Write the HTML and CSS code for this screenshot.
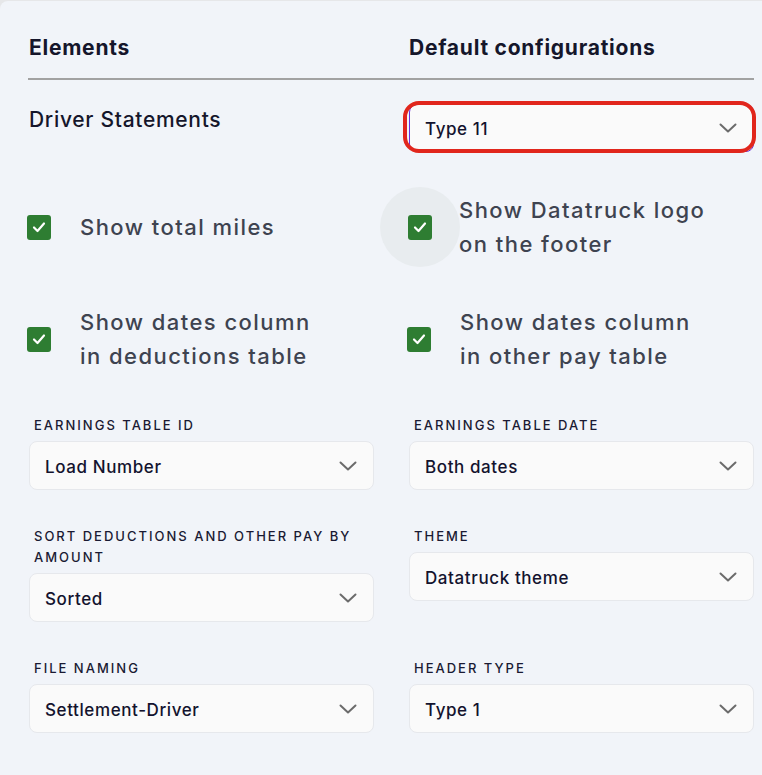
FILE: index.html
```html
<!DOCTYPE html>
<html>
<head>
<meta charset="utf-8">
<link rel="stylesheet" href="styles.css">
</head>
<body>
<div class="panel">
  <div class="head">
    <div class="head-title">Elements</div>
    <div class="head-title">Default configurations</div>
  </div>
  <div class="divider"></div>

  <div class="grid top-row">
    <div class="section-title">Driver Statements</div>
    <div class="select-wrap">
      <div class="select select-focused">
        <span class="select-value">Type 11</span>
        <svg class="chev" width="18" height="10" viewBox="0 0 18 10"><polyline points="1.5,1.5 9,8.5 16.5,1.5" fill="none" stroke="#6b6b6b" stroke-width="2" stroke-linecap="round" stroke-linejoin="round"/></svg>
      </div>
      <div class="annotation"></div>
    </div>
  </div>

  <div class="grid check-row first">
    <label class="check">
      <span class="box"><svg width="16" height="16" viewBox="0 0 16 16"><polyline points="3,8.5 6.5,12 13,4.5" fill="none" stroke="#fff" stroke-width="2.2" stroke-linecap="round" stroke-linejoin="round"/></svg></span>
      <span class="check-text">Show total miles</span>
    </label>
    <label class="check">
      <span class="box hovered"><svg width="16" height="16" viewBox="0 0 16 16"><polyline points="3,8.5 6.5,12 13,4.5" fill="none" stroke="#fff" stroke-width="2.2" stroke-linecap="round" stroke-linejoin="round"/></svg></span>
      <span class="check-text">Show Datatruck logo<br>on the footer</span>
    </label>
  </div>

  <div class="grid check-row second">
    <label class="check">
      <span class="box"><svg width="16" height="16" viewBox="0 0 16 16"><polyline points="3,8.5 6.5,12 13,4.5" fill="none" stroke="#fff" stroke-width="2.2" stroke-linecap="round" stroke-linejoin="round"/></svg></span>
      <span class="check-text">Show dates column<br>in deductions table</span>
    </label>
    <label class="check">
      <span class="box"><svg width="16" height="16" viewBox="0 0 16 16"><polyline points="3,8.5 6.5,12 13,4.5" fill="none" stroke="#fff" stroke-width="2.2" stroke-linecap="round" stroke-linejoin="round"/></svg></span>
      <span class="check-text">Show dates column<br>in other pay table</span>
    </label>
  </div>

  <div class="grid form-row row-1">
    <div class="field">
      <div class="label">EARNINGS TABLE ID</div>
      <div class="select"><span class="select-value">Load Number</span><svg class="chev" width="18" height="10" viewBox="0 0 18 10"><polyline points="1.5,1.5 9,8.5 16.5,1.5" fill="none" stroke="#6b6b6b" stroke-width="2" stroke-linecap="round" stroke-linejoin="round"/></svg></div>
    </div>
    <div class="field">
      <div class="label">EARNINGS TABLE DATE</div>
      <div class="select"><span class="select-value">Both dates</span><svg class="chev" width="18" height="10" viewBox="0 0 18 10"><polyline points="1.5,1.5 9,8.5 16.5,1.5" fill="none" stroke="#6b6b6b" stroke-width="2" stroke-linecap="round" stroke-linejoin="round"/></svg></div>
    </div>
  </div>

  <div class="grid form-row">
    <div class="field">
      <div class="label">SORT DEDUCTIONS AND OTHER PAY BY AMOUNT</div>
      <div class="select"><span class="select-value">Sorted</span><svg class="chev" width="18" height="10" viewBox="0 0 18 10"><polyline points="1.5,1.5 9,8.5 16.5,1.5" fill="none" stroke="#6b6b6b" stroke-width="2" stroke-linecap="round" stroke-linejoin="round"/></svg></div>
    </div>
    <div class="field">
      <div class="label">THEME</div>
      <div class="select"><span class="select-value">Datatruck theme</span><svg class="chev" width="18" height="10" viewBox="0 0 18 10"><polyline points="1.5,1.5 9,8.5 16.5,1.5" fill="none" stroke="#6b6b6b" stroke-width="2" stroke-linecap="round" stroke-linejoin="round"/></svg></div>
    </div>
  </div>

  <div class="grid form-row">
    <div class="field">
      <div class="label">FILE NAMING</div>
      <div class="select"><span class="select-value">Settlement-Driver</span><svg class="chev" width="18" height="10" viewBox="0 0 18 10"><polyline points="1.5,1.5 9,8.5 16.5,1.5" fill="none" stroke="#6b6b6b" stroke-width="2" stroke-linecap="round" stroke-linejoin="round"/></svg></div>
    </div>
    <div class="field">
      <div class="label">HEADER TYPE</div>
      <div class="select"><span class="select-value">Type 1</span><svg class="chev" width="18" height="10" viewBox="0 0 18 10"><polyline points="1.5,1.5 9,8.5 16.5,1.5" fill="none" stroke="#6b6b6b" stroke-width="2" stroke-linecap="round" stroke-linejoin="round"/></svg></div>
    </div>
  </div>
</div>
</body>
</html>
```

FILE: styles.css
```css
html, body {
  margin: 0;
  padding: 0;
}
body {
  background: #e6e7e9;
  font-family: Inter, "Noto Sans", "Liberation Sans", sans-serif;
  width: 762px;
  height: 775px;
  overflow: hidden;
}
.panel {
  margin-top: 1px;
  background: #f1f4f9;
  border-top-left-radius: 8px;
  height: 774px;
  padding: 33px 8px 0 29px;
  box-sizing: border-box;
}
.head {
  display: grid;
  grid-template-columns: 345px 345px;
  column-gap: 35px;
}
.head-title {
  font-size: 21px;
  line-height: 28px;
  font-weight: 700;
  color: #15162b;
  letter-spacing: 0.75px;
}
.divider {
  margin: 16px 0 0 -1px;
  width: 726px;
  height: 2px;
  background: #a2a2a2;
}
.grid {
  display: grid;
  grid-template-columns: 345px 345px;
  column-gap: 35px;
}
.top-row {
  margin-top: 24px;
}
.section-title {
  margin-top: 2px;
  font-size: 21px;
  line-height: 28px;
  font-weight: 500;
  color: #15162b;
  letter-spacing: 0.7px;
}
.select-wrap {
  position: relative;
}
.select {
  height: 49px;
  box-sizing: border-box;
  background: #fafafa;
  border: 1px solid #e6e8ec;
  border-radius: 8px;
  display: flex;
  align-items: center;
  justify-content: space-between;
  padding: 0 16px 0 15px;
}
.select-focused {
  height: 48px;
  border-color: #6a2fdc;
}
.select-value {
  padding-top: 2px;
  font-size: 17px;
  font-weight: 500;
  color: #13132e;
  letter-spacing: 0.6px;
}
.chev {
  display: block;
}
.annotation {
  position: absolute;
  left: -6px;
  right: -2px;
  top: -3px;
  bottom: -1px;
  border: 4px solid #e1261c;
  border-radius: 16px;
  pointer-events: none;
}
.check-row.first {
  margin-top: 41px;
}
.check-row.second {
  margin-top: 44px;
}
.check {
  display: flex;
  align-items: center;
  min-height: 68px;
}
.box {
  position: relative;
  flex: none;
  width: 24px;
  height: 25px;
  margin-left: -2px;
  margin-right: 29px;
  background: #2e7d32;
  border-radius: 3px;
  display: flex;
  align-items: center;
  justify-content: center;
}
.box svg {
  position: relative;
  z-index: 1;
}
.box.hovered::before {
  content: "";
  position: absolute;
  left: 50%;
  top: 50%;
  width: 80px;
  height: 80px;
  margin: -40px 0 0 -40px;
  border-radius: 50%;
  background: #e8ecef;
  z-index: -1;
}
.box.hovered {
  z-index: 0;
  margin-left: -1px;
  margin-right: 27px;
}
.box.hovered::after {
  content: "";
  position: absolute;
  inset: 0;
  background: #2e7d32;
  border-radius: 3px;
}
.check-text {
  font-size: 22px;
  line-height: 34px;
  font-weight: 500;
  color: #3e4350;
  letter-spacing: 1.45px;
}
.form-row {
  margin-top: 35px;
}
.form-row.row-1 {
  margin-top: 41px;
}
.label {
  margin: 0 0 5px 5px;
  padding-top: 1px;
  font-size: 13px;
  line-height: 21px;
  font-weight: 500;
  color: #1a1a33;
  letter-spacing: 2px;
}
```
